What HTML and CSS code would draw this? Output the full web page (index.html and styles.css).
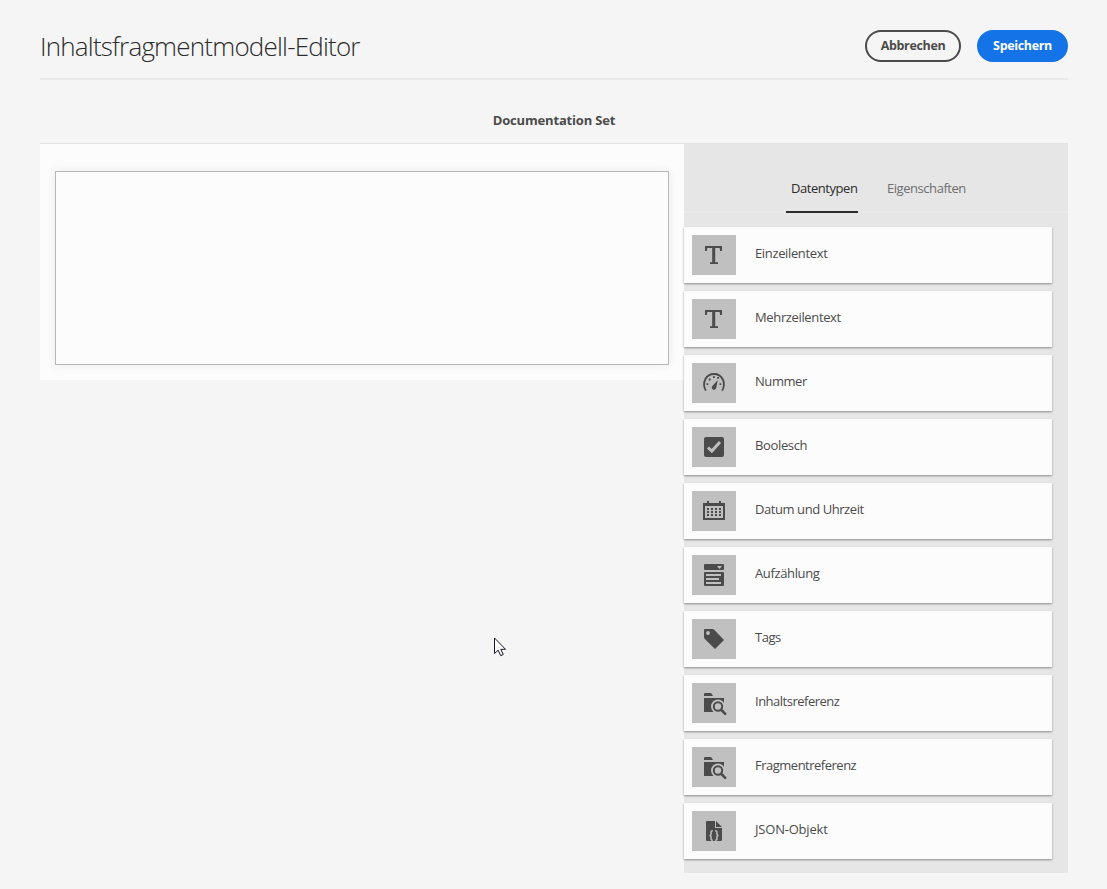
FILE: index.html
```html
<!DOCTYPE html>
<html lang="de">
<head>
<meta charset="utf-8">
<title>Inhaltsfragmentmodell-Editor</title>
<link rel="stylesheet" href="styles.css">
</head>
<body>
<header class="header">
  <h1 class="title">Inhaltsfragmentmodell-Editor</h1>
  <div class="actions">
    <button class="btn btn-outline">Abbrechen</button>
    <button class="btn btn-primary">Speichern</button>
  </div>
</header>
<h2 class="model-name">Documentation Set</h2>
<main class="editor">
  <section class="canvas"><div class="dropzone"></div></section>
  <aside class="panel">
    <nav class="tabs">
      <a class="tab tab-active">Datentypen</a>
      <a class="tab">Eigenschaften</a>
    </nav>
    <ul class="types">
      <li class="card"><span class="icon"><svg viewBox="0 0 44 40"><path d="M13 11h17v5h-1.800l-.6-3H23.200V27.200h2.800V29h-8v-1.800h2.200V13h-4.800l-.6 3H13z"/></svg></span><span class="label">Einzeilentext</span></li>
      <li class="card"><span class="icon"><svg viewBox="0 0 44 40"><path d="M13 11h17v5h-1.800l-.6-3H23.200V27.200h2.800V29h-8v-1.800h2.200V13h-4.800l-.6 3H13z"/></svg></span><span class="label">Mehrzeilentext</span></li>
      <li class="card"><span class="icon"><svg viewBox="0 0 44 40"><path class="line" d="M13.800 27.700C9.500 19.500 14 11 22 11s12.500 8.500 8.200 16.700"/><path d="M25.800 17 24.200 25c-.5 1.500-2 2.200-3.300 1.500s-1.600-2.200-.5-3.500zM14.500 20.200h1.800v1.800h-1.800zM16.800 15.600h1.800v1.800h-1.800zM21 13.300h1.800v1.800h-1.800zM25.200 13.900h1.800v1.800h-1.800zM27.500 20.200h1.800v1.800h-1.800z"/></svg></span><span class="label tight">Nummer</span></li>
      <li class="card"><span class="icon"><svg viewBox="0 0 44 40"><rect x="12" y="10" width="20" height="20" rx="2"/><path class="knock-line" d="m16 20.500 3.800 3.500L28 14.900"/></svg></span><span class="label">Boolesch</span></li>
      <li class="card"><span class="icon"><svg viewBox="0 0 44 40"><path fill-rule="evenodd" d="M11 12h4v-2h2v2h10v-2h2v2h4v17H11zM13 15v12h18V15z"/><path d="M15 17h2v2h-2zM19 17h2v2h-2zM23 17h2v2h-2zM27 17h2v2h-2zM15 20h2v2h-2zM19 20h2v2h-2zM23 20h2v2h-2zM27 20h2v2h-2zM15 23h2v2h-2zM19 23h2v2h-2zM23 23h2v2h-2zM27 23h2v2h-2z"/></svg></span><span class="label tight">Datum und Uhrzeit</span></li>
      <li class="card"><span class="icon"><svg viewBox="0 0 44 40"><rect x="12" y="9" width="20" height="6" rx="1"/><rect x="12" y="17" width="20" height="14" rx="1"/><path class="knock" d="M25 11h5l-2.500 3zM14 19h15v2H14zM14 23h13v2H14zM14 27h15v2H14z"/></svg></span><span class="label">Aufzählung</span></li>
      <li class="card"><span class="icon"><svg viewBox="0 0 44 40"><path d="M13 10h7.500a2 2 0 0 1 1.400.6L32 21l-9 9-10.400-10.300A2 2 0 0 1 12 18.300V11a1 1 0 0 1 1-1z"/><circle class="knock" cx="16" cy="14" r="1.900"/></svg></span><span class="label tighter">Tags</span></li>
      <li class="card"><span class="icon"><svg viewBox="0 0 44 40"><path d="M12 13v-2a1 1 0 0 1 1-1h6l2 3zM12 15h20v14H12z"/><circle class="halo" cx="26" cy="23.500" r="5"/><circle class="lens" cx="26" cy="23.500" r="4.200"/><path class="handle" d="m29 26.700 4.200 4.200"/></svg></span><span class="label tighter">Inhaltsreferenz</span></li>
      <li class="card"><span class="icon"><svg viewBox="0 0 44 40"><path d="M12 13v-2a1 1 0 0 1 1-1h6l2 3zM12 15h20v14H12z"/><circle class="halo" cx="26" cy="23.500" r="5"/><circle class="lens" cx="26" cy="23.500" r="4.200"/><path class="handle" d="m29 26.700 4.200 4.200"/></svg></span><span class="label tighter">Fragmentreferenz</span></li>
      <li class="card"><span class="icon"><svg viewBox="0 0 44 40"><path d="M15 10h8v7h7v12a1 1 0 0 1-1 1H15a1 1 0 0 1-1-1V11a1 1 0 0 1 1-1zM24 10l6 6h-6z"/><path class="brace" d="M20.800 19.800c-2.300 0-1.700 1.200-1.700 3 0 1.200-.5 1.700-1.600 1.700 1.100 0 1.600.5 1.600 1.700 0 1.800-.6 3 1.700 3M23.200 19.800c2.300 0 1.700 1.200 1.700 3 0 1.200.5 1.700 1.600 1.700-1.100 0-1.600.5-1.600 1.700 0 1.800.6 3-1.700 3"/></svg></span><span class="label loose">JSON-Objekt</span></li>
    </ul>
  </aside>
</main>
<svg class="cursor" viewBox="0 0 13 20"><path d="M.5 1v15.500l3.700-3.300 2.500 5.500 2.600-1.200-2.500-5.200h4.700z"/></svg>
</body>
</html>
```
FILE: styles.css
```css
* { box-sizing: border-box; }
body {
  margin: 0;
  height: 889px;
  padding: 0 39px 0 40px;
  overflow: hidden;
  background: #f5f5f5;
  color: #4b4b4b;
  font: 13px/20px "Open Sans", "Noto Sans", sans-serif;
}
.header {
  height: 80px;
  display: flex;
  justify-content: space-between;
  align-items: flex-start;
  border-bottom: 2px solid #eaeaea;
}
.title {
  margin: 26px 0 0;
  font-size: 26px;
  line-height: 40px;
  font-weight: 300;
  letter-spacing: -0.8px;
  color: #2c2c2c;
  white-space: nowrap;
}
.actions { display: flex; gap: 16px; padding-top: 30px; }
.btn {
  height: 32px;
  padding: 0;
  border-radius: 16px;
  border: 2px solid #4b4b4b;
  background: transparent;
  color: #4b4b4b;
  font: 700 12.5px/20px "Open Sans", "Noto Sans", sans-serif;
  letter-spacing: -0.35px;
  white-space: nowrap;
}
.btn-outline { width: 96px; }
.btn-primary { width: 91px; background: #1473e6; border-color: #1473e6; color: #fff; }
.model-name {
  margin: 0;
  height: 63px;
  padding-top: 30px;
  text-align: center;
  font-size: 13px;
  line-height: 20px;
  font-weight: 700;
  letter-spacing: -0.18px;
}
.editor {
  display: flex;
  align-items: flex-start;
  height: 730px;
}
.canvas {
  width: 644px;
  height: 237px;
  padding: 28px 15px 15px;
  background: #fcfcfc;
  box-shadow: inset 0 1px #e1e1e1;
}
.dropzone {
  height: 194px;
  border: 1px solid #b8b8b8;
  background: #fcfcfc;
  box-shadow: 0 0 10px rgba(0, 0, 0, .08);
}
.panel { width: 384px; height: 730px; background: #e6e6e6; box-shadow: inset 0 1px #e1e1e1; }
.tabs {
  height: 70px;
  display: flex;
  gap: 29px;
  padding-left: 102px;
  border-bottom: 2px solid #e9e9e9;
}
.tab { height: 70px; padding-top: 35px; color: #6e6e6e; letter-spacing: -0.45px; white-space: nowrap; }
.tab-active { width: 72px; padding-left: 5px; color: #2c2c2c; border-bottom: 2px solid #2c2c2c; }
.types {
  list-style: none;
  margin: 0;
  padding: 14px 16px 0 0;
  display: grid;
  gap: 8px;
}
.card {
  height: 56px;
  display: flex;
  padding: 8px;
  gap: 19px;
  background: #fcfcfc;
  box-shadow: 0 1px 2px rgba(0, 0, 0, .4);
}
.icon { width: 44px; height: 40px; background: #c0c0c0; }
.icon svg { display: block; width: 44px; height: 40px; fill: #4b4b4b; }
.icon .line { fill: none; stroke: #4b4b4b; stroke-width: 1.8; }
.icon .knock { fill: #c0c0c0; }
.icon .knock-line { fill: none; stroke: #c0c0c0; stroke-width: 3; }
.icon .halo { fill: #c0c0c0; stroke: #c0c0c0; stroke-width: 4; }
.icon .lens { fill: #c0c0c0; stroke: #4b4b4b; stroke-width: 2; }
.icon .handle { fill: none; stroke: #4b4b4b; stroke-width: 2.6; stroke-linecap: round; }
.icon .brace { fill: none; stroke: #c0c0c0; stroke-width: 1.5; }
.label { padding: 8px 0 0; letter-spacing: -0.36px; white-space: nowrap; }
.label.tight { letter-spacing: -0.43px; }
.label.tighter { letter-spacing: -0.5px; }
.label.loose { letter-spacing: -0.2px; }
.cursor {
  position: absolute;
  left: 494px;
  top: 637px;
  width: 13px;
  height: 20px;
  fill: #fff;
  stroke: #1b1528;
  stroke-width: 1;
}
```
